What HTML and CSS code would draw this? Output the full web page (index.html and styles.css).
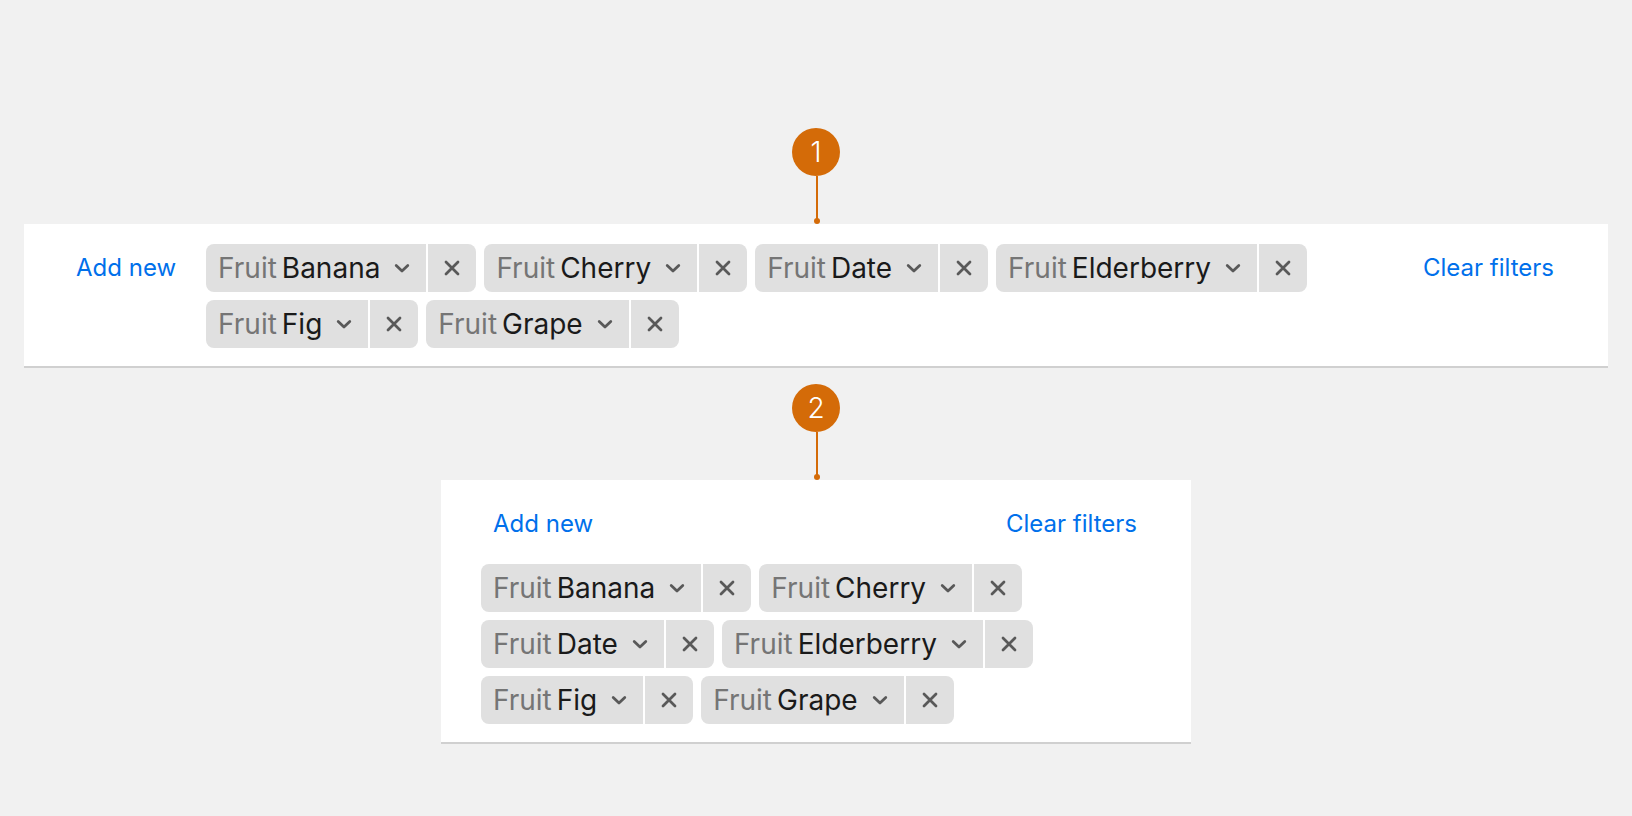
FILE: index.html
```html
<!DOCTYPE html>
<html lang="en">
<head>
<meta charset="utf-8">
<meta name="viewport" content="width=device-width, initial-scale=1">
<title>Filter bar</title>
<link rel="stylesheet" href="styles.css">
</head>
<body>
<svg width="0" height="0" class="sprite" aria-hidden="true">
  <symbol id="chevron" viewBox="0 0 24 24"><path d="M6.200 9.400 12 15l5.800-5.600"/></symbol>
  <symbol id="cross" viewBox="0 0 24 24"><path d="M6 6l12 12M18 6 6 18"/></symbol>
  <symbol id="stem" viewBox="0 0 48 48"><path d="M24 0h2v43h-2z"/><circle cx="25" cy="45" r="3"/></symbol>
</svg>
<main class="page">
  <section class="example">
    <div class="pin"><span class="pin-number">1</span><svg class="pin-stem" aria-hidden="true"><use href="#stem"/></svg></div>
    <div class="filter-bar wide">
      <button type="button" class="action add">Add new</button>
      <ul class="chips">
        <li class="chip"><button type="button" class="chip-value"><span class="chip-label">Fruit</span><span>Banana</span><svg class="icon chevron"><use href="#chevron"/></svg></button><button type="button" class="chip-remove" aria-label="Remove Banana"><svg class="icon"><use href="#cross"/></svg></button></li>
        <li class="chip"><button type="button" class="chip-value"><span class="chip-label">Fruit</span><span>Cherry</span><svg class="icon chevron"><use href="#chevron"/></svg></button><button type="button" class="chip-remove" aria-label="Remove Cherry"><svg class="icon"><use href="#cross"/></svg></button></li>
        <li class="chip"><button type="button" class="chip-value"><span class="chip-label">Fruit</span><span>Date</span><svg class="icon chevron"><use href="#chevron"/></svg></button><button type="button" class="chip-remove" aria-label="Remove Date"><svg class="icon"><use href="#cross"/></svg></button></li>
        <li class="chip"><button type="button" class="chip-value"><span class="chip-label">Fruit</span><span>Elderberry</span><svg class="icon chevron"><use href="#chevron"/></svg></button><button type="button" class="chip-remove" aria-label="Remove Elderberry"><svg class="icon"><use href="#cross"/></svg></button></li>
        <li class="chip"><button type="button" class="chip-value"><span class="chip-label">Fruit</span><span>Fig</span><svg class="icon chevron"><use href="#chevron"/></svg></button><button type="button" class="chip-remove" aria-label="Remove Fig"><svg class="icon"><use href="#cross"/></svg></button></li>
        <li class="chip"><button type="button" class="chip-value"><span class="chip-label">Fruit</span><span>Grape</span><svg class="icon chevron"><use href="#chevron"/></svg></button><button type="button" class="chip-remove" aria-label="Remove Grape"><svg class="icon"><use href="#cross"/></svg></button></li>
      </ul>
      <button type="button" class="action clear">Clear filters</button>
    </div>
  </section>
  <section class="example">
    <div class="pin"><span class="pin-number">2</span><svg class="pin-stem" aria-hidden="true"><use href="#stem"/></svg></div>
    <div class="filter-bar narrow">
      <button type="button" class="action add">Add new</button>
      <button type="button" class="action clear">Clear filters</button>
      <ul class="chips">
        <li class="chip"><button type="button" class="chip-value"><span class="chip-label">Fruit</span><span>Banana</span><svg class="icon chevron"><use href="#chevron"/></svg></button><button type="button" class="chip-remove" aria-label="Remove Banana"><svg class="icon"><use href="#cross"/></svg></button></li>
        <li class="chip"><button type="button" class="chip-value"><span class="chip-label">Fruit</span><span>Cherry</span><svg class="icon chevron"><use href="#chevron"/></svg></button><button type="button" class="chip-remove" aria-label="Remove Cherry"><svg class="icon"><use href="#cross"/></svg></button></li>
        <li class="chip"><button type="button" class="chip-value"><span class="chip-label">Fruit</span><span>Date</span><svg class="icon chevron"><use href="#chevron"/></svg></button><button type="button" class="chip-remove" aria-label="Remove Date"><svg class="icon"><use href="#cross"/></svg></button></li>
        <li class="chip"><button type="button" class="chip-value"><span class="chip-label">Fruit</span><span>Elderberry</span><svg class="icon chevron"><use href="#chevron"/></svg></button><button type="button" class="chip-remove" aria-label="Remove Elderberry"><svg class="icon"><use href="#cross"/></svg></button></li>
        <li class="chip"><button type="button" class="chip-value"><span class="chip-label">Fruit</span><span>Fig</span><svg class="icon chevron"><use href="#chevron"/></svg></button><button type="button" class="chip-remove" aria-label="Remove Fig"><svg class="icon"><use href="#cross"/></svg></button></li>
        <li class="chip"><button type="button" class="chip-value"><span class="chip-label">Fruit</span><span>Grape</span><svg class="icon chevron"><use href="#chevron"/></svg></button><button type="button" class="chip-remove" aria-label="Remove Grape"><svg class="icon"><use href="#cross"/></svg></button></li>
      </ul>
    </div>
  </section>
</main>
</body>
</html>
```

FILE: styles.css
```css
* {
  box-sizing: border-box;
}

body {
  margin: 0;
  background: #f1f1f1;
  color: #1a1a1a;
  font-family: Inter, "Liberation Sans", sans-serif;
}

button {
  margin: 0;
  border: 0;
  font: inherit;
  color: inherit;
  cursor: pointer;
}

.sprite {
  display: none;
}

.page {
  display: flex;
  flex-direction: column;
  gap: 16px;
  padding: 128px 24px 72px;
}

.example,
.pin {
  display: flex;
  flex-direction: column;
  align-items: center;
}

.pin-number {
  width: 48px;
  height: 48px;
  border-radius: 50%;
  background: #d46b08;
  color: #fff;
  font-size: 28px;
  font-weight: 300;
  line-height: 48px;
  text-align: center;
}

.pin-stem {
  width: 48px;
  height: 48px;
  fill: #d46b08;
}

.filter-bar {
  display: grid;
  width: 100%;
  padding: 20px 40px 18px;
  border-bottom: 2px solid #d0d0d0;
  background: #fff;
}

.wide {
  grid-template-columns: auto 1fr auto;
  align-items: start;
  column-gap: 18px;
}

.narrow {
  grid-template-columns: 1fr auto;
  row-gap: 16px;
  max-width: 750px;
}

.narrow .add {
  justify-self: start;
}

.narrow .chips {
  grid-column: 1 / -1;
}

.action {
  height: 48px;
  padding: 0 12px;
  background: none;
  color: #0070eb;
  font-size: 24px;
  line-height: 48px;
  white-space: nowrap;
}

.clear {
  padding-right: 14px;
}

.chips {
  display: flex;
  flex-wrap: wrap;
  gap: 8px;
  margin: 0;
  padding: 0;
  list-style: none;
}

.chip {
  display: flex;
  gap: 2px;
  overflow: hidden;
  border-radius: 8px;
  font-size: 28px;
  line-height: 48px;
}

.chip-value,
.chip-remove {
  display: flex;
  align-items: center;
  height: 48px;
  padding: 0 12px;
  background: #e0e0e0;
}

.chip-value {
  gap: 5px;
}

.chip-label {
  color: #757575;
}

.icon {
  width: 24px;
  height: 24px;
  fill: none;
  stroke: #595959;
  stroke-width: 2.75;
  stroke-linecap: round;
  stroke-linejoin: round;
}

.chevron {
  margin-left: 5px;
}
```
